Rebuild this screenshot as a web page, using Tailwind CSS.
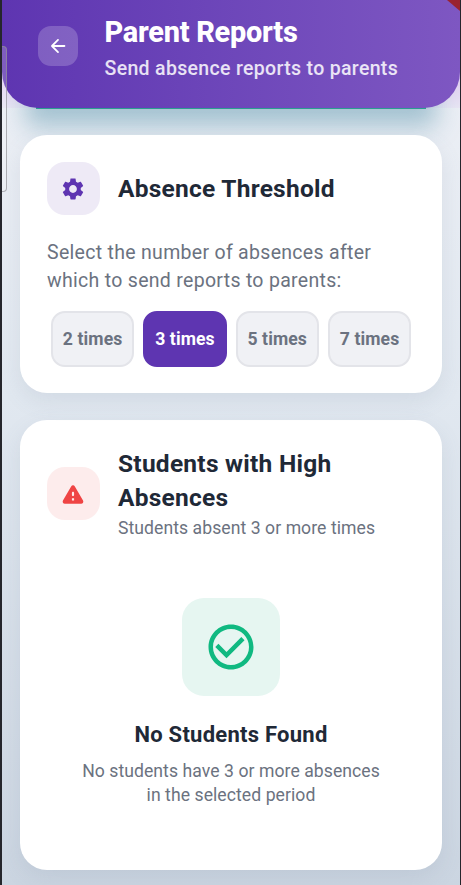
<!DOCTYPE html>
<html lang="en">
<head>
<meta charset="utf-8">
<title>Parent Reports</title>
<script src="https://cdn.jsdelivr.net/npm/@tailwindcss/browser@4"></script>
</head>
<body class="w-[461px] h-[885px] overflow-hidden bg-[#25262c] font-[Roboto,sans-serif]">
<div class="relative ml-[2px] flex h-[885px] w-[458px] flex-col overflow-hidden bg-linear-to-b from-[#eceff5] from-10% via-[#e1e8f0] via-45% to-[#cbd5e1]">
  <header class="relative h-[108px] shrink-0">
    <div class="absolute inset-0 bg-linear-to-b from-[#dfcff0] from-75% to-[#e9e6f4]"></div>
    <div class="absolute inset-x-[34px] bottom-[-1px] h-[20px] bg-[#2b9c91] shadow-[0_7px_24px_10px_rgba(45,120,150,0.38)]"></div>
    <div class="relative flex h-[108px] items-start rounded-b-[36px] bg-linear-to-r from-[#5e35b1] to-[#7e57c2] pl-[36px]">
      <button aria-label="Back" class="mt-[26px] flex size-[40px] shrink-0 items-center justify-center rounded-[13px] bg-white/20">
        <svg class="size-[22px]" viewBox="0 0 24 24" fill="white"><path d="M19 11H7.83l4.88-4.88c.39-.39.39-1.03 0-1.42-.39-.39-1.02-.39-1.41 0l-6.59 6.59c-.39.39-.39 1.02 0 1.41l6.59 6.59c.39.39 1.02.39 1.41 0 .39-.39.39-1.02 0-1.41L7.83 13H19c.55 0 1-.45 1-1s-.45-1-1-1z"/></svg>
      </button>
      <div class="ml-[26.5px] whitespace-nowrap pt-[15px]">
        <h1 class="text-[28.9px] leading-[34px] font-extrabold tracking-[-0.25px] text-white">Parent Reports</h1>
        <p class="mt-[7px] text-[19.5px] leading-[26px] font-medium tracking-[0.33px] text-white/85">Send absence reports to parents</p>
      </div>
    </div>
  </header>
  <main class="flex flex-col gap-[27px] px-[18px] pt-[27px]">
    <section class="relative flex h-[258px] w-[422px] flex-col rounded-[27px] bg-white px-[27px] pt-[27px] shadow-[0_8px_22px_rgba(100,116,139,0.12)]">
      <div class="flex items-center gap-[18px]">
        <div class="flex size-[53px] items-center justify-center rounded-[18px] bg-[#eeeaf6]">
          <svg class="relative left-[-0.5px] size-[26px]" viewBox="0 0 24 24" fill="#5e35b1"><path d="M19.14 12.94c.04-.3.06-.61.06-.94 0-.32-.02-.64-.07-.94l2.03-1.58c.18-.14.23-.41.12-.61l-1.92-3.32c-.12-.22-.37-.29-.59-.22l-2.39.96c-.5-.38-1.03-.7-1.62-.94l-.36-2.54c-.04-.24-.24-.41-.48-.41h-3.84c-.24 0-.43.17-.47.41l-.36 2.54c-.59.24-1.13.57-1.62.94l-2.39-.96c-.22-.08-.47 0-.59.22L2.74 8.87c-.12.21-.08.47.12.61l2.03 1.58c-.05.3-.09.63-.09.94s.02.64.07.94l-2.03 1.58c-.18.14-.23.41-.12.61l1.92 3.32c.12.22.37.29.59.22l2.39-.96c.5.38 1.03.7 1.62.94l.36 2.54c.05.24.24.41.48.41h3.84c.24 0 .44-.17.47-.41l.36-2.54c.59-.24 1.13-.56 1.62-.94l2.39.96c.22.08.47 0 .59-.22l1.92-3.32c.12-.22.07-.47-.12-.61l-2.01-1.58zM12 15.6c-1.98 0-3.6-1.62-3.6-3.6s1.62-3.6 3.6-3.6 3.6 1.62 3.6 3.6-1.62 3.6-3.6 3.6z"/></svg>
        </div>
        <h2 class="text-[24.5px] leading-[34px] font-bold tracking-[0.25px] whitespace-nowrap text-[#1f2937]">Absence Threshold</h2>
      </div>
      <p class="mt-[24px] text-[19.5px] leading-[28px] tracking-[0.3px] whitespace-nowrap text-[#6b7280]">Select the number of absences after<br>which to send reports to parents:</p>
      <div class="mt-[16px] ml-[4px] flex gap-[9px] text-[17.6px] font-bold tracking-[0.1px] whitespace-nowrap text-[#6b7280]">
        <button class="h-[56px] w-[83.3px] shrink-0 rounded-[14px] border-2 border-[#e3e4e9] bg-[#f0f1f5]">2 times</button>
        <button class="h-[56px] w-[83.3px] shrink-0 rounded-[14px] border-2 border-[#5e35b1] bg-[#5e35b1] text-white">3 times</button>
        <button class="h-[56px] w-[83.3px] shrink-0 rounded-[14px] border-2 border-[#e3e4e9] bg-[#f0f1f5]">5 times</button>
        <button class="h-[56px] w-[83.3px] shrink-0 rounded-[14px] border-2 border-[#e3e4e9] bg-[#f0f1f5]">7 times</button>
      </div>
    </section>
    <section class="flex h-[450px] w-[422px] flex-col rounded-[27px] bg-white px-[27px] pt-[27px] shadow-[0_8px_22px_rgba(100,116,139,0.12)]">
      <div class="flex items-center gap-[18px]">
        <div class="flex size-[53px] items-center justify-center rounded-[18px] bg-[#fdecec]">
          <svg class="relative left-[-0.5px] size-[26px]" viewBox="0 0 24 24" fill="#ef4444"><path d="M4.47 21h15.06c1.54 0 2.5-1.67 1.73-3L13.73 4.99c-.77-1.33-2.69-1.33-3.46 0L2.74 18c-.77 1.33.19 3 1.73 3zM12 14c-.55 0-1-.45-1-1v-2c0-.55.45-1 1-1s1 .45 1 1v2c0 .55-.45 1-1 1zm1 4h-2v-2h2v2z"/></svg>
        </div>
        <div class="whitespace-nowrap">
          <h2 class="text-[24.5px] leading-[34px] font-bold tracking-[0.25px] text-[#1f2937]">Students with High<br>Absences</h2>
          <p class="relative top-[1px] text-[17.6px] leading-[25px] tracking-[0.06px] text-[#6b7280]">Students absent 3 or more times</p>
        </div>
      </div>
      <div class="mt-[58px] flex flex-col items-center text-center whitespace-nowrap">
        <div class="flex size-[98px] items-center justify-center rounded-[22px] bg-[#e6f6f1]">
          <svg class="size-[54px]" viewBox="0 0 24 24" fill="#10b981"><path d="M16.59 7.58L10 14.17l-3.59-3.58L5 12l5 5 8-8zM12 2C6.48 2 2 6.48 2 12s4.48 10 10 10 10-4.48 10-10S17.52 2 12 2zm0 18c-4.42 0-8-3.58-8-8s3.58-8 8-8 8 3.58 8 8-3.58 8-8 8z"/></svg>
        </div>
        <h3 class="mt-[24px] text-[22px] leading-[30px] font-bold tracking-[0.25px] text-[#1f2937]">No Students Found</h3>
        <p class="mt-[9px] text-[17.6px] leading-[24px] tracking-[0.06px] text-[#6b7280]">No students have 3 or more absences<br>in the selected period</p>
      </div>
    </section>
  </main>
  <div class="absolute top-[46px] left-[-5px] h-[146px] w-[10px] rounded-[4px] border border-[#909096]/70 bg-white/20"></div>
  <svg class="absolute top-0 right-0 h-[11px] w-[13px]" viewBox="0 0 13 11"><path d="M0 0H13V11Z" fill="#992331"/></svg>
</div>
</body>
</html>
